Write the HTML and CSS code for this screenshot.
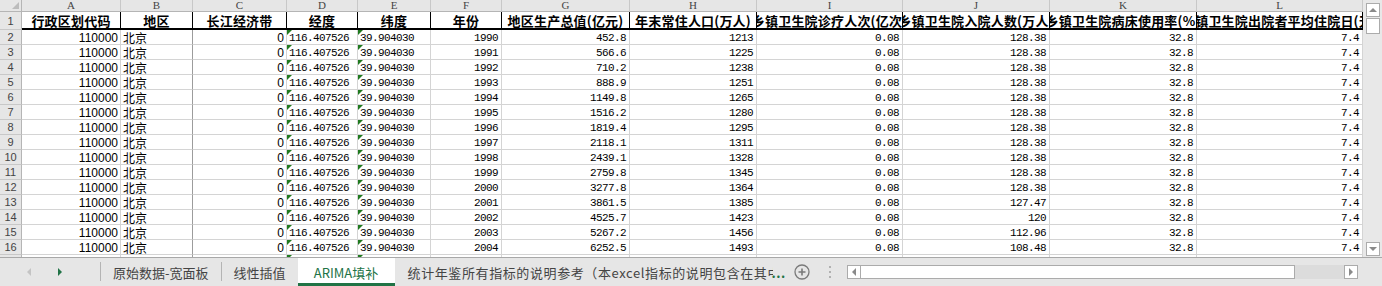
FILE: index.html
```html
<!DOCTYPE html>
<html lang="zh-CN">
<head>
  <meta charset="UTF-8">
  <meta name="viewport" content="width=device-width, initial-scale=1.0">
  <title>ARIMA填补</title>
  <link rel="stylesheet" href="styles.css">
</head>
<body>
  <div class="app">
    <div class="main">
      <div class="sheet" id="sheet">
        <div class="corner"></div>
        <div class="colhead">A</div>
        <div class="colhead">B</div>
        <div class="colhead">C</div>
        <div class="colhead">D</div>
        <div class="colhead">E</div>
        <div class="colhead">F</div>
        <div class="colhead">G</div>
        <div class="colhead">H</div>
        <div class="colhead">I</div>
        <div class="colhead">J</div>
        <div class="colhead">K</div>
        <div class="colhead">L</div>

        <div class="rowhead">1</div>
        <div class="cell head"><span>行政区划代码</span></div>
        <div class="cell head"><span>地区</span></div>
        <div class="cell head"><span>长江经济带</span></div>
        <div class="cell head"><span>经度</span></div>
        <div class="cell head"><span>纬度</span></div>
        <div class="cell head"><span>年份</span></div>
        <div class="cell head"><span>地区生产总值(亿元)</span></div>
        <div class="cell head"><span>年末常住人口(万人)</span></div>
        <div class="cell head"><span>乡镇卫生院诊疗人次(亿次)</span></div>
        <div class="cell head"><span>乡镇卫生院入院人数(万人)</span></div>
        <div class="cell head"><span>乡镇卫生院病床使用率(%)</span></div>
        <div class="cell head"><span>乡镇卫生院出院者平均住院日(天)</span></div>
      </div>
      <div class="vscroll">
        <div class="sbtn"><span class="arrow-up"></span></div>
        <div class="vthumb"></div>
        <div class="vtrack"></div>
        <div class="sbtn"><span class="arrow-down"></span></div>
      </div>
    </div>

    <div class="tabbar">
      <div class="nav">
        <span class="tri-left"></span>
        <span class="tri-right"></span>
      </div>
      <div class="sep"></div>
      <div class="tab">原始数据-宽面板</div>
      <div class="sep"></div>
      <div class="tab">线性插值</div>
      <div class="tab active">ARIMA填补</div>
      <div class="tab long">统计年鉴所有指标的说明参考（本excel指标的说明包含在其中）</div>
      <div class="more">...</div>
      <div class="add">
        <svg width="16" height="16" viewBox="0 0 16 16">
          <circle cx="8" cy="8" r="7" fill="none" stroke="#7a7a7a" stroke-width="1.3"/>
          <path d="M8 4.5v7M4.5 8h7" stroke="#7a7a7a" stroke-width="1.6"/>
        </svg>
      </div>
      <div class="grip"><i></i><i></i><i></i></div>
      <div class="hscroll">
        <div class="sbtn"><span class="arrow-left"></span></div>
        <div class="hthumb"></div>
        <div class="htrack"></div>
        <div class="sbtn"><span class="arrow-right"></span></div>
      </div>
    </div>
  </div>

  <script>
    // year, GDP, population, admissions
    const rows = [
      [1990, '452.8', 1213, '128.38'],
      [1991, '566.6', 1225, '128.38'],
      [1992, '710.2', 1238, '128.38'],
      [1993, '888.9', 1251, '128.38'],
      [1994, '1149.8', 1265, '128.38'],
      [1995, '1516.2', 1280, '128.38'],
      [1996, '1819.4', 1295, '128.38'],
      [1997, '2118.1', 1311, '128.38'],
      [1998, '2439.1', 1328, '128.38'],
      [1999, '2759.8', 1345, '128.38'],
      [2000, '3277.8', 1364, '128.38'],
      [2001, '3861.5', 1385, '127.47'],
      [2002, '4525.7', 1423, '120'],
      [2003, '5267.2', 1456, '112.96'],
      [2004, '6252.5', 1493, '108.48'],
      [2005, '6969.5', 1538, '106.46']
    ];

    const sheet = document.getElementById('sheet');
    rows.forEach((r, i) => {
      const cells = [
        ['rowhead', i + 2],
        ['cell num sans', '110000'],
        ['cell cjk colb', '北京'],
        ['cell num sans', '0'],
        ['cell tri', '116.407526'],
        ['cell tri', '39.904030'],
        ['cell num', r[0]],
        ['cell num', r[1]],
        ['cell num', r[2]],
        ['cell num', '0.08'],
        ['cell num', r[3]],
        ['cell num', '32.8'],
        ['cell num', '7.4']
      ];
      cells.forEach(([cls, text]) => {
        const d = document.createElement('div');
        d.className = cls;
        d.textContent = text;
        sheet.appendChild(d);
      });
    });
  </script>
</body>
</html>
```

FILE: styles.css
```css
body {
  margin: 0;
  background: #fff;
  font-family: "Noto Sans CJK SC", sans-serif;
  color: #000;
}

.app {
  width: 1382px;
  height: 286px;
  overflow: hidden;
  display: flex;
  flex-direction: column;
}

.main {
  display: flex;
  height: 257px;
  flex: none;
}

.sheet {
  width: 1363px;
  height: 257px;
  overflow: hidden;
  display: grid;
  grid-template-columns: 22px 99px 72px 94px 71px 73px 71px 128px 127px 146px 147px 147px 166px;
  grid-template-rows: 12px 18px;
  grid-auto-rows: 15px;
  align-content: start;
}

.corner,
.colhead,
.rowhead {
  background: #e6e6e6;
  color: #444;
  box-sizing: border-box;
  display: flex;
  align-items: center;
  justify-content: center;
}

.corner {
  border-right: 1px solid #b5b5b5;
  border-bottom: 1px solid #b5b5b5;
  position: relative;
}

.corner::after {
  content: "";
  position: absolute;
  right: 2px;
  bottom: 2px;
  border-left: 7px solid transparent;
  border-bottom: 7px solid #bcbcbc;
}

.colhead {
  border-right: 1px solid #c8c8c8;
  border-bottom: 1px solid #b5b5b5;
  font-family: "Liberation Serif", serif;
  font-size: 11px;
  line-height: 11px;
}

.rowhead {
  border-right: 1px solid #b5b5b5;
  border-bottom: 1px solid #c8c8c8;
  font-family: "Liberation Sans", sans-serif;
  font-size: 11px;
  line-height: 14px;
}

.cell {
  box-sizing: border-box;
  border-right: 1px solid #d4d4d4;
  border-bottom: 1px solid #d4d4d4;
  overflow: hidden;
  white-space: nowrap;
  display: flex;
  align-items: center;
  padding: 1px 2px 0;
  font-family: "Liberation Mono", monospace;
  font-size: 11px;
  letter-spacing: -0.6px;
  line-height: 14px;
  position: relative;
}

.num {
  justify-content: flex-end;
  padding-right: 3px;
}

.sans {
  font-family: "Liberation Sans", sans-serif;
  font-size: 12px;
  letter-spacing: 0;
  padding-right: 2px;
}

.cjk {
  font-family: "Noto Sans CJK SC", sans-serif;
  font-size: 12px;
  letter-spacing: 0;
}

.colb {
  border-right-color: #9c9c9c;
}

.tri::before {
  content: "";
  position: absolute;
  top: 0;
  left: 0;
  border-top: 5px solid #1f7a1f;
  border-right: 5px solid transparent;
}

.head {
  justify-content: center;
  padding: 0;
  border-right-color: #000;
  border-bottom: 2px solid #000;
  font-family: "Noto Sans CJK SC", sans-serif;
  font-weight: 700;
  font-size: 13px;
  letter-spacing: 0.2px;
  line-height: 15px;
}

.head span {
  flex: none;
}

/* vertical scrollbar */
.vscroll {
  width: 19px;
  background: #e8e8e8;
  display: flex;
  flex-direction: column;
  align-items: center;
  padding: 3px 0 1px;
  box-sizing: border-box;
}

.sbtn {
  width: 14px;
  height: 14px;
  box-sizing: border-box;
  background: #fff;
  border: 1px solid #ababab;
  display: flex;
  align-items: center;
  justify-content: center;
  flex: none;
}

.vthumb {
  width: 14px;
  height: 16px;
  box-sizing: border-box;
  background: #fff;
  border: 1px solid #ababab;
  margin-top: 1px;
}

.vtrack {
  flex: 1;
}

.arrow-up {
  border-left: 4px solid transparent;
  border-right: 4px solid transparent;
  border-bottom: 4px solid #8a8a8a;
}

.arrow-down {
  border-left: 4px solid transparent;
  border-right: 4px solid transparent;
  border-top: 4px solid #8a8a8a;
}

.arrow-left {
  border-top: 4px solid transparent;
  border-bottom: 4px solid transparent;
  border-right: 4px solid #8a8a8a;
}

.arrow-right {
  border-top: 4px solid transparent;
  border-bottom: 4px solid transparent;
  border-left: 4px solid #8a8a8a;
}

/* sheet tabs */
.tabbar {
  height: 29px;
  box-sizing: border-box;
  border-top: 1px solid #a8a8a8;
  background: #e6e6e6;
  display: flex;
  align-items: stretch;
  font-size: 13px;
  color: #444;
}

.nav {
  width: 100px;
  display: flex;
  align-items: center;
  flex: none;
}

.tri-left {
  margin-left: 27px;
  border-top: 4px solid transparent;
  border-bottom: 4px solid transparent;
  border-right: 4px solid #c4c4c4;
}

.tri-right {
  margin-left: 27px;
  border-top: 4px solid transparent;
  border-bottom: 4px solid transparent;
  border-left: 4px solid #217346;
}

.sep {
  width: 1px;
  background: #b4b4b4;
  margin: 4px 0 5px;
  flex: none;
}

.tab {
  padding: 0 12px;
  display: flex;
  align-items: center;
  white-space: nowrap;
  flex: none;
}

.tab.active {
  width: 97px;
  box-sizing: border-box;
  padding: 0;
  justify-content: center;
  background: #fff;
  color: #217346;
  border-bottom: 3px solid #217346;
  padding-top: 3px;
}

.tab.long {
  width: 378px;
  box-sizing: border-box;
  padding-left: 13px;
  padding-right: 0;
  overflow: hidden;
  letter-spacing: 0.6px;
}

.more {
  width: 12px;
  display: flex;
  align-items: center;
  justify-content: center;
  color: #217346;
  font-weight: 700;
  letter-spacing: 0.5px;
  flex: none;
}

.add {
  width: 34px;
  display: flex;
  align-items: center;
  justify-content: center;
  flex: none;
}

.grip {
  width: 22px;
  display: flex;
  flex-direction: column;
  align-items: center;
  justify-content: center;
  gap: 3px;
  margin-right: 6px;
  flex: none;
}

.grip i {
  width: 2px;
  height: 2px;
  background: #b0b0b0;
}

.hscroll {
  width: 511px;
  display: flex;
  align-items: center;
  flex: none;
}

.hthumb {
  width: 434px;
  height: 14px;
  box-sizing: border-box;
  background: #fff;
  border: 1px solid #ababab;
  border-left: none;
}

.htrack {
  flex: 1;
  height: 14px;
  background: #dcdcdc;
}
```
